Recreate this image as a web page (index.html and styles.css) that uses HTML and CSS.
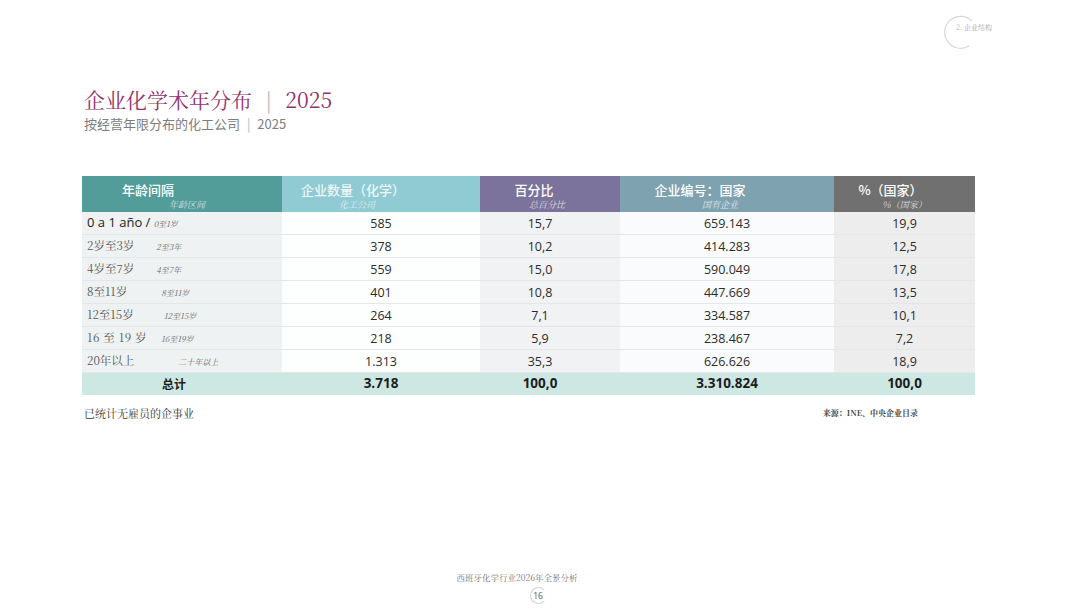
FILE: index.html
```html
<!DOCTYPE html>
<html lang="zh">
<head>
<meta charset="utf-8">
<title>企业化学术年分布</title>
<link rel="stylesheet" href="styles.css">
</head>
<body>
<div class="page">
  <div class="corner">
    <svg class="corner-arc" width="40" height="40" viewBox="0 0 40 40">
      <path d="M30 8 A16 16 0 1 0 27 33" fill="none" stroke="#d6d6d6" stroke-width="1.2"/>
    </svg>
    <span class="corner-text">2. 企业结构</span>
  </div>

  <header class="head">
    <h1 class="title">企业化学术年分布 <span class="bar">|</span> 2025</h1>
    <p class="subtitle">按经营年限分布的化工公司 <span class="bar-s">|</span> 2025</p>
  </header>

  <table class="grid">
    <colgroup>
      <col class="w1"><col class="w2"><col class="w3"><col class="w4"><col class="w5">
    </colgroup>
    <thead>
      <tr>
        <th class="h1"><span class="hm hm1">年龄间隔</span><span class="hs hs1">年龄区间</span></th>
        <th class="h2"><span class="hm hm2">企业数量（化学）</span><span class="hs hs2">化工公司</span></th>
        <th class="h3"><span class="hm hm3">百分比</span><span class="hs hs3">总百分比</span></th>
        <th class="h4"><span class="hm hm4">企业编号：国家</span><span class="hs hs4">国有企业</span></th>
        <th class="h5"><span class="hm hm5">%（国家）</span><span class="hs hs5">%（国家）</span></th>
      </tr>
    </thead>
    <tbody>
      <tr>
        <td class="c1"><span class="lab-sans">0 a 1 año /</span> <span class="sub">0至1岁</span></td>
        <td class="c2">585</td><td class="c3">15,7</td><td class="c4">659.143</td><td class="c5">19,9</td>
      </tr>
      <tr>
        <td class="c1"><span class="lab">2岁至3岁</span><span class="sub s-a">2至3年</span></td>
        <td class="c2">378</td><td class="c3">10,2</td><td class="c4">414.283</td><td class="c5">12,5</td>
      </tr>
      <tr>
        <td class="c1"><span class="lab">4岁至7岁</span><span class="sub s-b">4至7年</span></td>
        <td class="c2">559</td><td class="c3">15,0</td><td class="c4">590.049</td><td class="c5">17,8</td>
      </tr>
      <tr>
        <td class="c1"><span class="lab">8至11岁</span><span class="sub s-c">8至11岁</span></td>
        <td class="c2">401</td><td class="c3">10,8</td><td class="c4">447.669</td><td class="c5">13,5</td>
      </tr>
      <tr>
        <td class="c1"><span class="lab">12至15岁</span><span class="sub s-d">12至15岁</span></td>
        <td class="c2">264</td><td class="c3">7,1</td><td class="c4">334.587</td><td class="c5">10,1</td>
      </tr>
      <tr>
        <td class="c1"><span class="lab lab-wide">16 至 19 岁</span><span class="sub s-e">16至19岁</span></td>
        <td class="c2">218</td><td class="c3">5,9</td><td class="c4">238.467</td><td class="c5">7,2</td>
      </tr>
      <tr>
        <td class="c1"><span class="lab">20年以上</span><span class="sub s-f">二十年以上</span></td>
        <td class="c2">1.313</td><td class="c3">35,3</td><td class="c4">626.626</td><td class="c5">18,9</td>
      </tr>
      <tr class="total">
        <td class="t1">总计</td>
        <td class="t2">3.718</td><td class="t3">100,0</td><td class="t4">3.310.824</td><td class="t5">100,0</td>
      </tr>
    </tbody>
  </table>

  <div class="notes">
    <span class="note">已统计无雇员的企事业</span>
    <span class="source">来源：INE、中央企业目录</span>
  </div>

  <footer class="foot">
    <span class="foot-title">西班牙化学行业2026年全景分析</span>
    <span class="page-num">16</span>
  </footer>
</div>
</body>
</html>
```

FILE: styles.css
```css
* { box-sizing: border-box; }
html, body { margin: 0; padding: 0; background: #ffffff; }
body { width: 1080px; height: 608px; overflow: hidden; }

.page {
  position: relative;
  width: 1080px;
  height: 608px;
  padding: 84px 105px 0 82px;
  font-family: "Noto Sans CJK SC", sans-serif;
}

.corner {
  position: absolute;
  left: 942px;
  top: 13px;
  width: 80px;
  height: 40px;
}
.corner-arc { position: absolute; left: 0; top: 0; }
.corner-text {
  position: absolute;
  left: 14px;
  top: 9px;
  font-family: "Noto Serif CJK SC", "Liberation Serif", "Noto Sans CJK SC", serif;
  font-size: 7px;
  color: #a8a8a8;
  white-space: nowrap;
}

.head { margin-left: 2px; }
.title {
  margin: 0;
  font-family: "Noto Serif CJK SC", "Liberation Serif", "Noto Sans CJK SC", serif;
  font-weight: 400;
  font-size: 21px;
  line-height: 30px;
  color: #92336b;
}
.title .bar { color: #a9a9a9; margin: 0 8px; font-weight: 300; }
.subtitle {
  margin: 0;
  font-family: "Noto Sans CJK SC", sans-serif;
  font-size: 13px;
  line-height: 20px;
  color: #7d7d7d;
}
.subtitle .bar-s { color: #b5b5b5; margin: 0 4px; }

.grid {
  margin-top: 42px;
  width: 893px;
  border-collapse: collapse;
  table-layout: fixed;
  font-family: "Open Sans", "Noto Sans CJK SC", sans-serif;
  font-size: 12.5px;
  color: #2b2b2b;
}
.w1 { width: 200px; }
.w2 { width: 198px; }
.w3 { width: 140px; }
.w4 { width: 214px; }
.w5 { width: 141px; }

.grid th {
  height: 36px;
  padding: 6px 0 0 0;
  vertical-align: top;
  font-weight: 400;
  color: #ffffff;
}
.hm {
  display: block;
  font-family: "Noto Sans CJK SC", sans-serif;
  font-size: 13px;
  line-height: 16px;
  font-weight: 500;
  text-align: center;
}
.hs {
  display: block;
  margin-top: 1px;
  font-family: "Noto Serif CJK SC", "Liberation Serif", "Noto Sans CJK SC", serif;
  font-style: italic;
  font-size: 9px;
  line-height: 11px;
  text-align: center;
  color: rgba(255,255,255,0.75);
}
.h1 { background: #529c9a; }
.h2 { background: #90cbd3; }
.h3 { background: #7b739b; }
.h4 { background: #7fa2b1; }
.h5 { background: #707070; }

.hm1 { padding-right: 68px; }
.hs1 { margin-left: 10px; }
.hm2 { padding-right: 56px; color: rgba(255,255,255,0.85); }
.hs2 { padding-right: 48px; }
.hm3 { padding-right: 32px; }
.hs3 { padding-right: 6px; }
.hm4 { padding-right: 54px; }
.hs4 { padding-right: 14px; }
.hm5 { padding-right: 28px; }
.hs5 { padding-right: 0; }

.grid td {
  height: 22.5px;
  padding: 0;
  text-align: center;
  vertical-align: middle;
  border-bottom: 1px solid #e3e7e7;
  line-height: 21px;
}
.c1 { background: #eff2f2; text-align: left !important; padding-left: 5px !important; white-space: nowrap; }
.c2 { background: #fdfefe; }
.c3 { background: #f1f2f3; padding-right: 20px !important; }
.c4 { background: #fafbfc; }
.c5 { background: #ededed; }

.lab-sans {
  font-family: "Open Sans", sans-serif;
  font-size: 13px;
  color: #222;
}
.lab {
  display: inline-block;
  font-family: "Noto Serif CJK SC", "Liberation Serif", "Noto Sans CJK SC", serif;
  font-size: 11.5px;
  color: #555;
}
.lab-wide { letter-spacing: 0.5px; }
.sub {
  display: inline-block;
  font-family: "Noto Serif CJK SC", "Liberation Serif", "Noto Sans CJK SC", serif;
  font-style: italic;
  font-size: 8px;
  color: #666;
}
.s-a { margin-left: 22px; }
.s-b { margin-left: 22px; }
.s-c { margin-left: 34px; }
.s-d { margin-left: 30px; }
.s-e { margin-left: 14px; }
.s-f { margin-left: 44px; }

.total td {
  background: #cde7e3;
  font-weight: 700;
  font-size: 13.5px;
  color: #1d1d1d;
  height: 22px;
  border-bottom: none;
}
.t1 {
  font-family: "Noto Sans CJK SC", sans-serif;
  font-size: 12px !important;
  padding-right: 16px !important;
}
.t3 { padding-right: 20px !important; }

.notes {
  display: flex;
  justify-content: space-between;
  align-items: center;
  width: 893px;
  margin-top: 10px;
  padding: 0 57px 0 2px;
}
.note {
  font-family: "Noto Serif CJK SC", "Liberation Serif", "Noto Sans CJK SC", serif;
  font-size: 11px;
  color: #333;
}
.source {
  font-family: "Noto Serif CJK SC", "Liberation Serif", "Noto Sans CJK SC", serif;
  font-size: 8px;
  font-weight: 700;
  color: #444;
}

.foot {
  position: absolute;
  left: 0;
  top: 571px;
  width: 1080px;
  display: flex;
  flex-direction: column;
  align-items: center;
  padding-right: 4px;
}
.foot-title {
  margin-right: 42px;
  font-family: "Noto Serif CJK SC", "Liberation Serif", "Noto Sans CJK SC", serif;
  font-size: 8.5px;
  color: #777;
  line-height: 13px;
}
.page-num {
  margin-top: 3px;
  width: 17px;
  height: 17px;
  border: 1px solid #cfcfcf;
  border-right-color: transparent;
  border-radius: 50%;
  font-family: "Open Sans", sans-serif;
  font-size: 8.5px;
  line-height: 15px;
  text-align: center;
  color: #555;
}
```
